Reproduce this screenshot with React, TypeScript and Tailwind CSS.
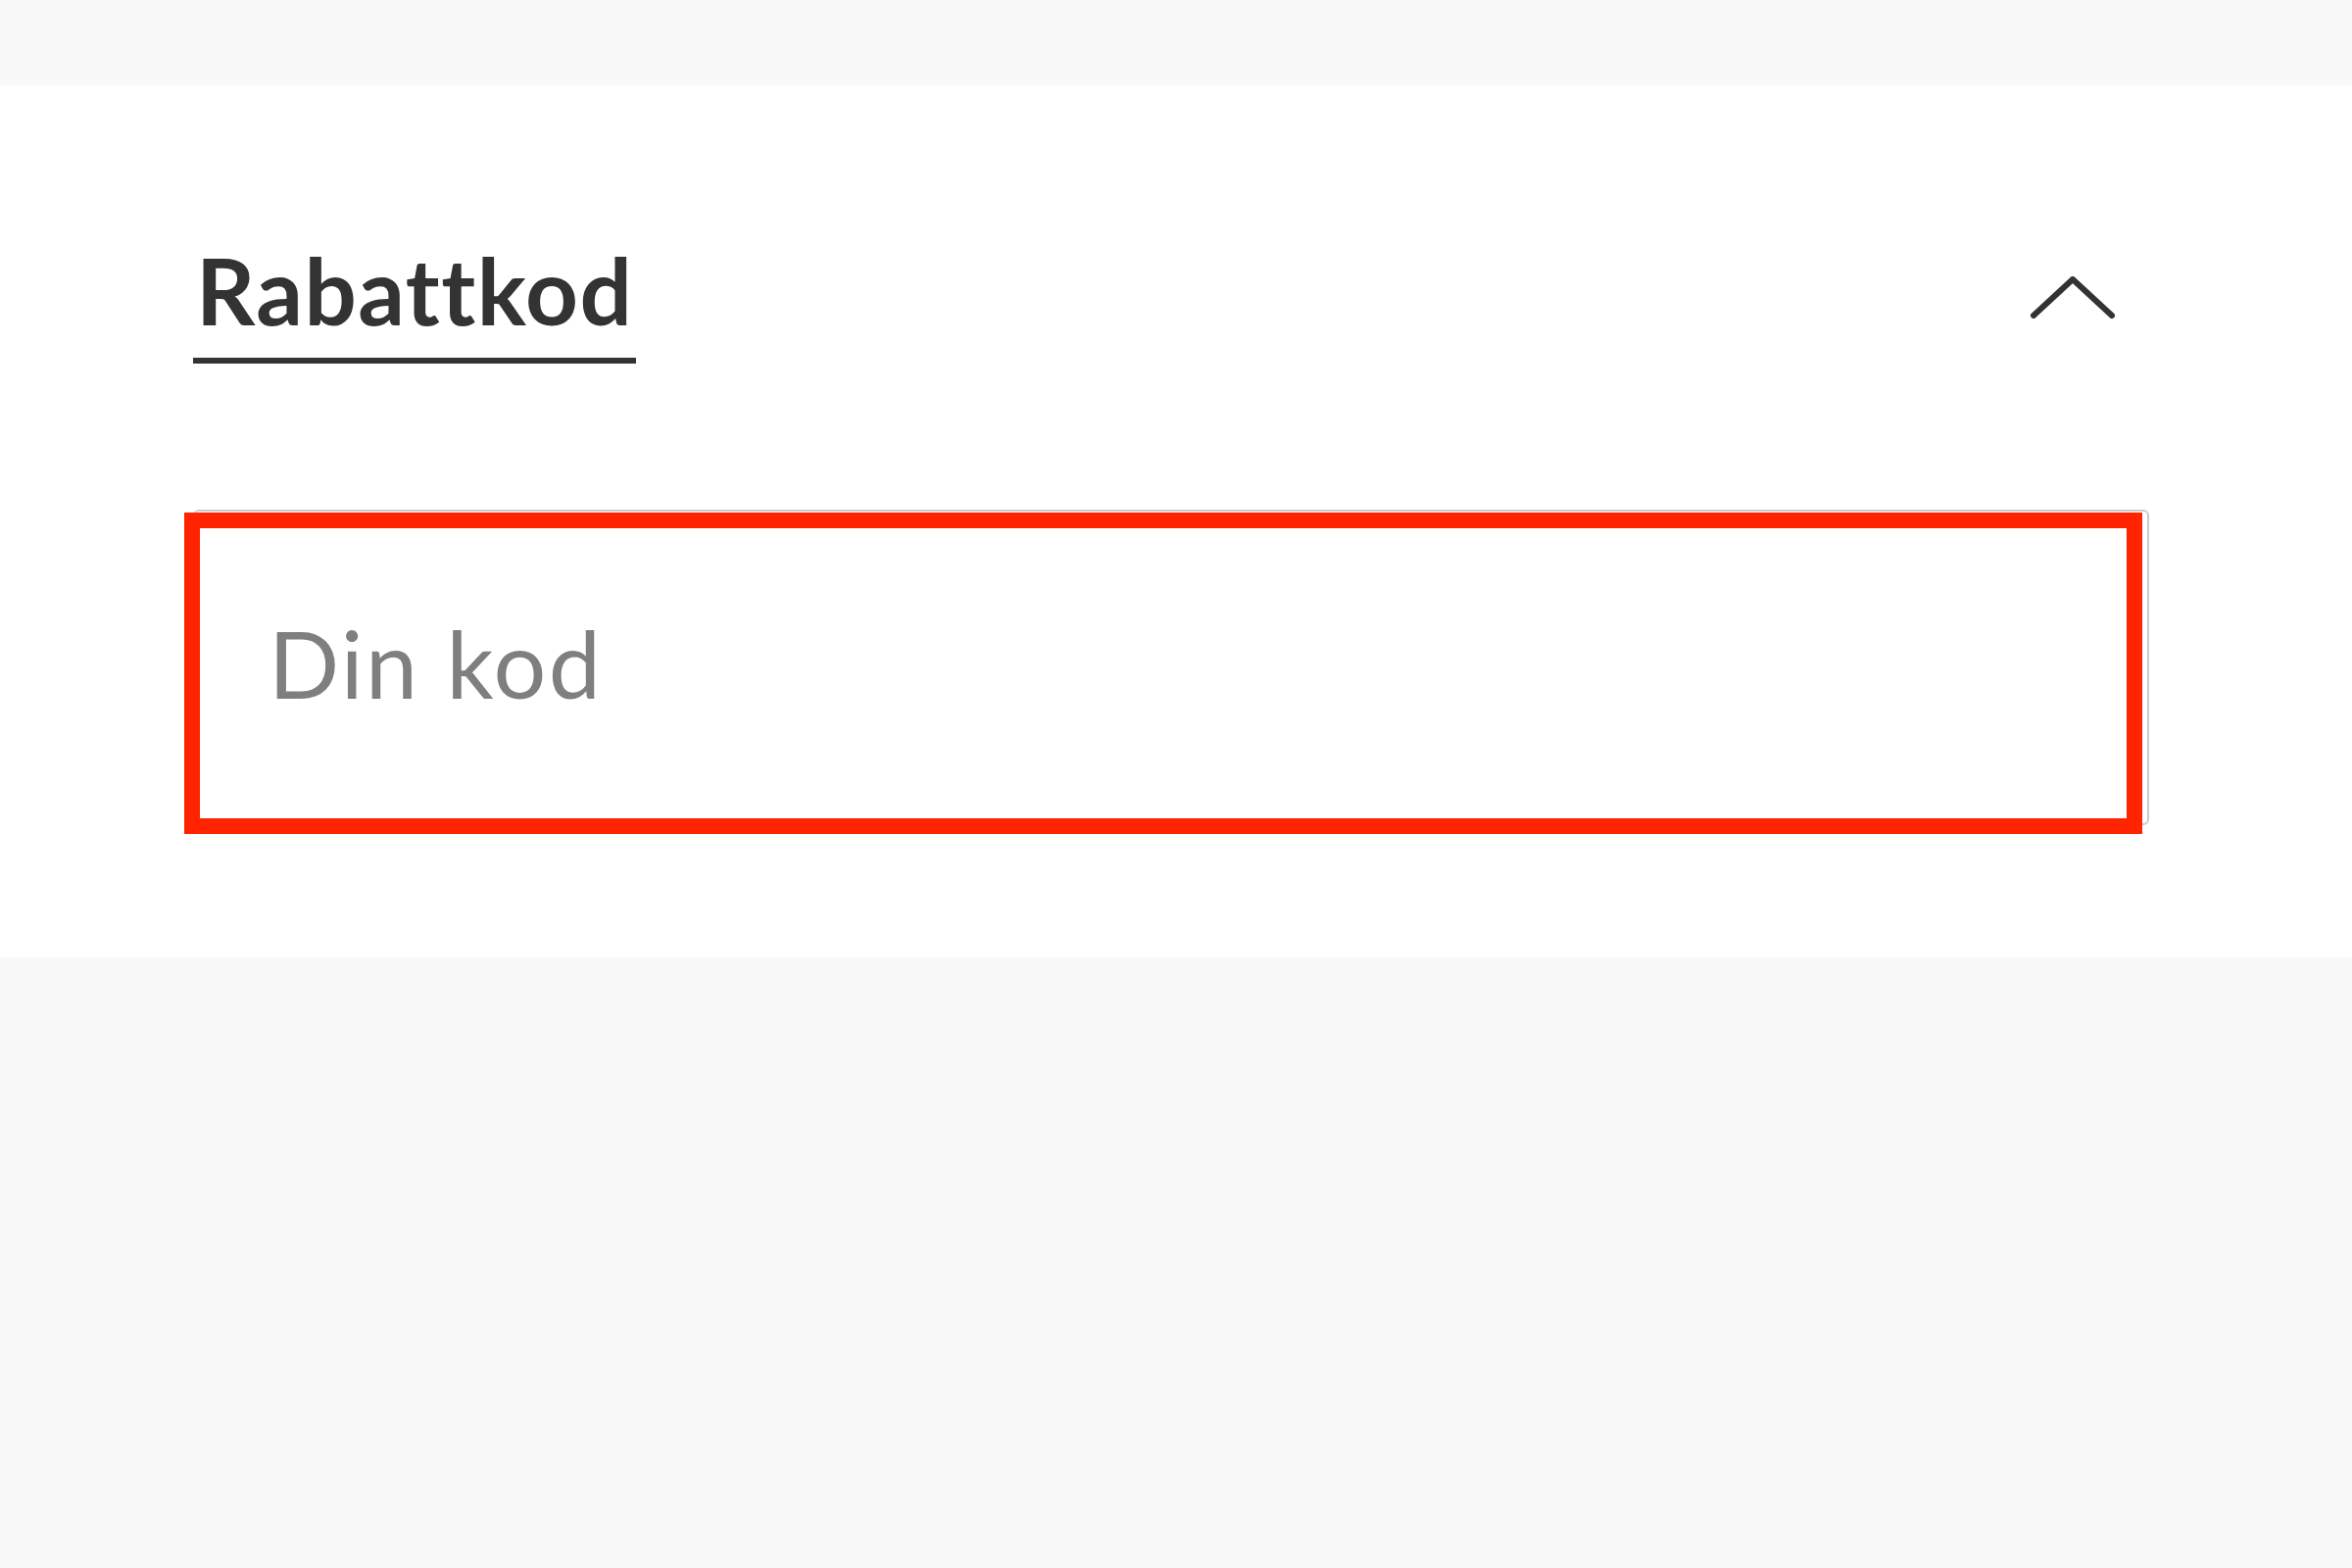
import React, { useState } from 'react';

function ChevronUp() {
  return (
    <svg width="90" height="46" viewBox="0 0 90 46" fill="none" className="mt-[33px] mr-[32px]">
      <polyline
        points="4,40 44,3 84,40"
        stroke="#333333"
        strokeWidth="6"
        strokeLinecap="round"
        strokeLinejoin="round"
      />
    </svg>
  );
}

export default function App() {
  const [code, setCode] = useState('');

  return (
    <div className="min-h-screen bg-[#f8f8f8] pt-[87px] font-['Lato','Liberation_Sans',sans-serif]">
      {/* Discount code panel */}
      <section className="h-[890px] bg-white pl-[197px] pr-[207px] pt-[162px]">
        <div className="flex items-start justify-between">
          <h2 className="inline-block border-b-[6px] border-[#333333] px-[3px] pb-[22px] text-[94px] leading-none font-bold tracking-[1.5px] text-[#333333]">
            Rabattkod
          </h2>
          <ChevronUp />
        </div>

        <div className="relative mt-[149px]">
          <input
            type="text"
            value={code}
            onChange={(e) => setCode(e.target.value)}
            placeholder="Din kod"
            className="h-[322px] w-full rounded-[6px] border-2 border-[#c9c9c9] bg-white pb-[10px] pl-[75px] text-[95px] tracking-[2.5px] text-[#333333] outline-none placeholder:text-[#7f7f7f]"
          />
          {/* highlight */}
          <div className="pointer-events-none absolute left-[-9px] right-[7px] top-[3px] bottom-[-9px] border-[16px] border-[#ff2300]" />
        </div>
      </section>
    </div>
  );
}
